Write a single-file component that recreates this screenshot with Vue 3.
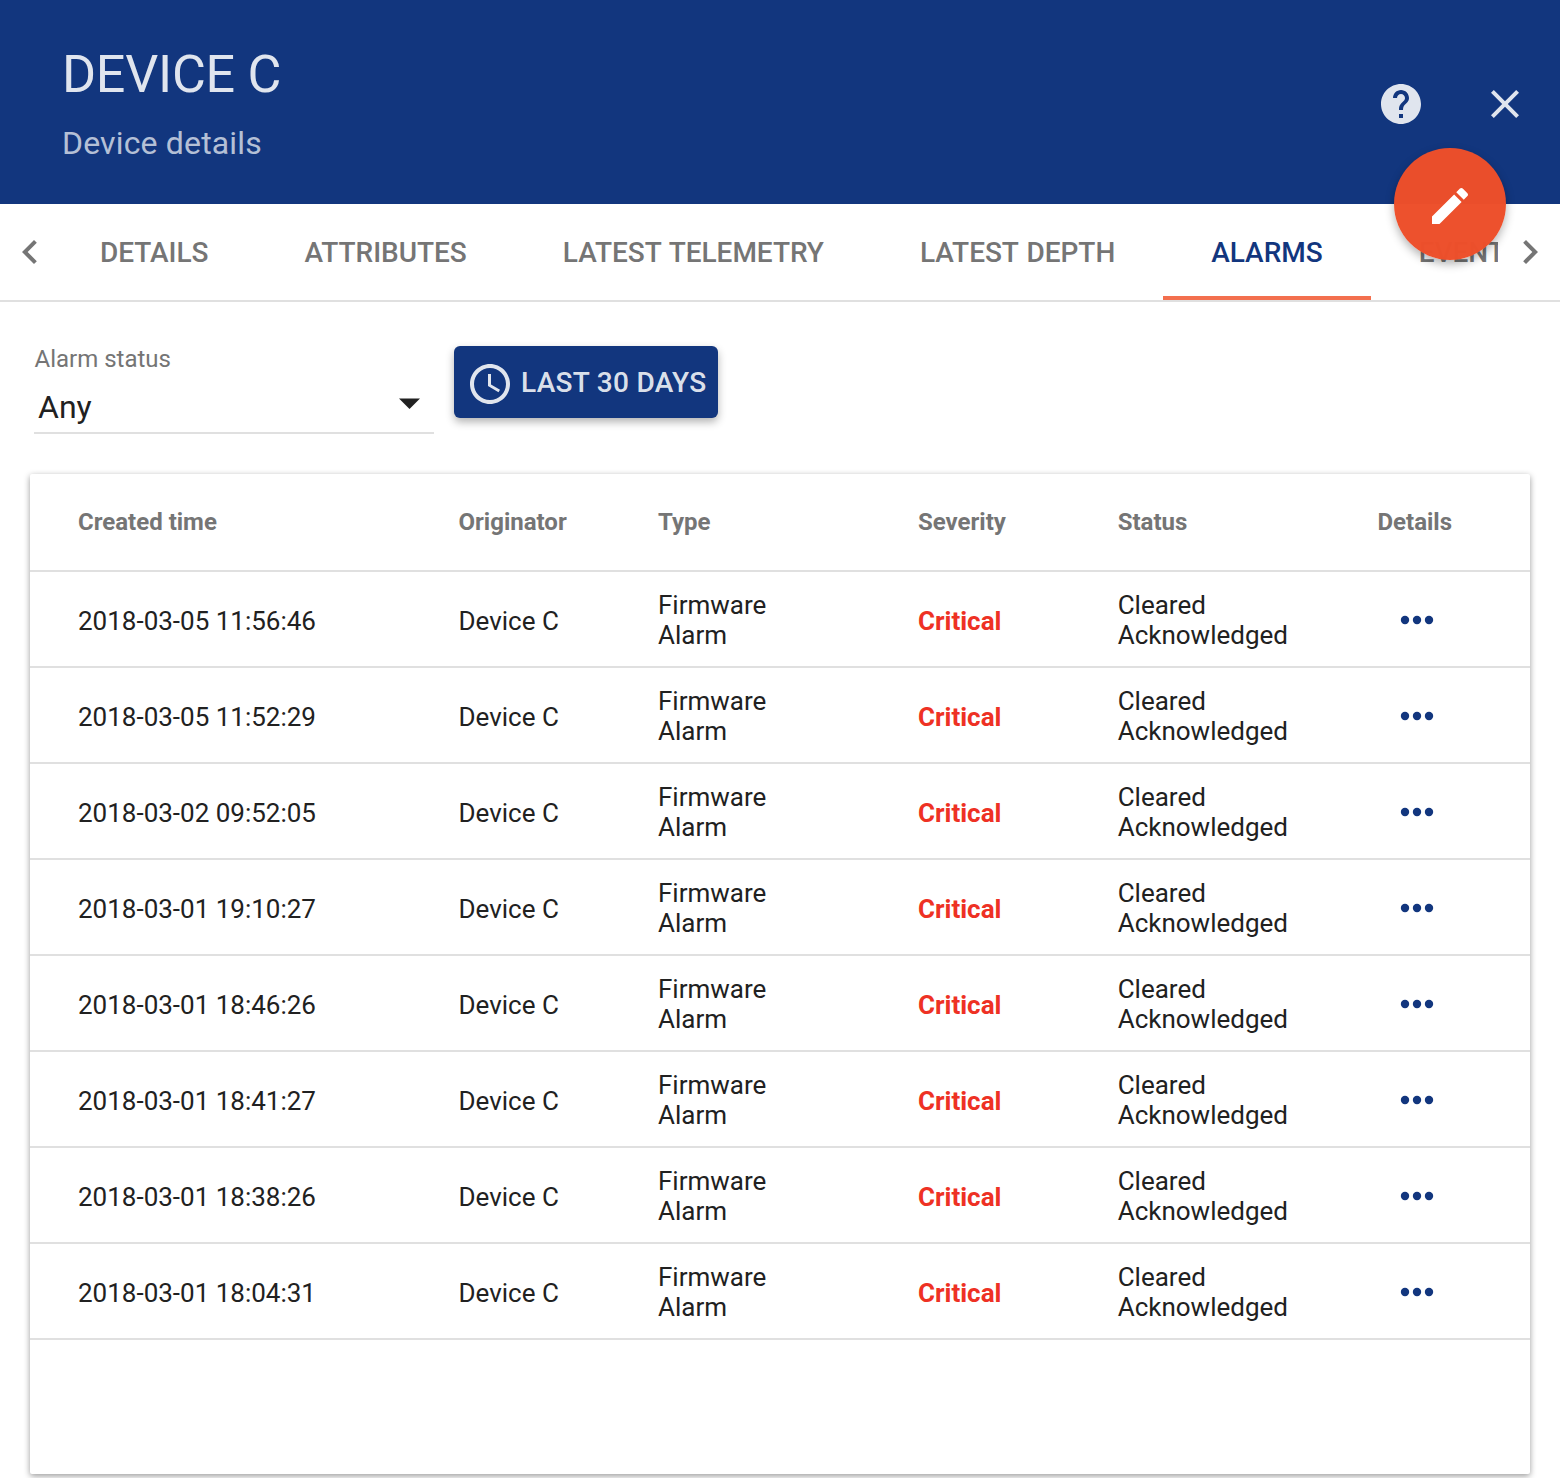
<script setup>
const tabs = ['DETAILS', 'ATTRIBUTES', 'LATEST TELEMETRY', 'LATEST DEPTH', 'ALARMS', 'EVENTS']
const times = [
  '2018-03-05 11:56:46', '2018-03-05 11:52:29', '2018-03-02 09:52:05', '2018-03-01 19:10:27',
  '2018-03-01 18:46:26', '2018-03-01 18:41:27', '2018-03-01 18:38:26', '2018-03-01 18:04:31',
]
</script>

<template>
  <div class="page">
    <header class="toolbar">
      <div class="titles">
        <h1>DEVICE C</h1>
        <p>Device details</p>
      </div>
      <svg class="help" viewBox="0 0 24 24"><path d="M12 2C6.48 2 2 6.48 2 12s4.480 10 10 10 10-4.480 10-10S17.520 2 12 2zm1 17h-2v-2h2v2zm2.070-7.750l-.9.920C13.450 12.900 13 13.500 13 15h-2v-.5c0-1.100.45-2.100 1.170-2.830l1.240-1.260c.37-.36.59-.86.59-1.410 0-1.100-.9-2-2-2s-2 .9-2 2H8c0-2.210 1.790-4 4-4s4 1.790 4 4c0 .88-.36 1.680-.93 2.250z" /></svg>
      <svg class="close" viewBox="0 0 24 24"><path d="M19 6.410L17.590 5 12 10.590 6.410 5 5 6.410 10.590 12 5 17.590 6.410 19 12 13.410 17.590 19 19 17.590 13.410 12z" /></svg>
      <button class="fab"><svg viewBox="0 0 24 24"><path d="M3 17.250V21h3.750L17.810 9.940l-3.750-3.750L3 17.250zM20.710 7.040c.39-.39.39-1.020 0-1.410l-2.340-2.340c-.39-.39-1.020-.39-1.410 0l-1.830 1.830 3.750 3.750 1.830-1.830z" /></svg></button>
    </header>
    <nav class="tabs">
      <svg class="arrow" viewBox="0 0 24 24"><path d="M15.410 7.410L14 6l-6 6 6 6 1.410-1.410L10.830 12z" /></svg>
      <div class="strip">
        <a v-for="t in tabs" :key="t" :class="{ active: t === 'ALARMS' }">{{ t }}</a>
      </div>
      <svg class="arrow next" viewBox="0 0 24 24"><path d="M10 6L8.590 7.410 13.170 12l-4.580 4.590L10 18l6-6z" /></svg>
    </nav>
    <section class="filters">
      <div class="field">
        <label>Alarm status</label>
        <div class="select"><span>Any</span><svg class="caret" viewBox="0 0 21 11"><path d="M0 .5h21L10.500 11z" /></svg></div>
      </div>
      <button class="range">
        <svg viewBox="0 0 24 24"><path d="M11.990 2C6.470 2 2 6.480 2 12s4.470 10 9.990 10C17.520 22 22 17.520 22 12S17.520 2 11.990 2zM12 20c-4.420 0-8-3.580-8-8s3.580-8 8-8 8 3.580 8 8-3.580 8-8 8zM12.500 7H11v6l5.250 3.150.75-1.230-4.500-2.670z" /></svg>
        <span>LAST 30 DAYS</span>
      </button>
    </section>
    <main class="card">
      <div class="row head">
        <div>Created time</div><div>Originator</div><div>Type</div><div>Severity</div><div>Status</div><div>Details</div>
      </div>
      <div v-for="t in times" :key="t" class="row">
        <div class="single">{{ t }}</div><div class="single">Device C</div><div>Firmware<br />Alarm</div><div class="single critical">Critical</div><div>Cleared<br />Acknowledged</div>
        <div class="more"><svg viewBox="0 0 36 10"><circle cx="6" cy="5" r="4.200" /><circle cx="18" cy="5" r="4.200" /><circle cx="30" cy="5" r="4.200" /></svg></div>
      </div>
    </main>
  </div>
</template>

<style>
body { margin: 0; background: #fff; }
</style>

<style scoped>
* { box-sizing: border-box; }
svg { display: block; fill: currentColor; flex: none; }
button { border: 0; padding: 0; font: inherit; }
.page { width: 1560px; height: 1478px; overflow: hidden; display: flex; flex-direction: column; font-family: Roboto, sans-serif; color: #212121; }
.toolbar { position: relative; height: 204px; flex: none; background: #12367e; color: rgba(255, 255, 255, 0.87); display: flex; align-items: center; padding: 4px 31px 0 62px; }
.titles { flex: 1; align-self: flex-start; padding-top: 41px; }
h1 { margin: 0; font-size: 52px; line-height: 60px; font-weight: 400; letter-spacing: -0.26px; }
p { margin: 17px 0 0; font-size: 32px; line-height: 42px; letter-spacing: 0.16px; color: rgba(255, 255, 255, 0.7); }
.help { width: 48px; height: 48px; margin-right: 56px; }
.close { width: 48px; height: 48px; }
.fab { position: absolute; z-index: 3; left: 1394px; top: 148px; width: 112px; height: 112px; border-radius: 50%; background: rgba(237, 79, 42, 0.99); color: #fff; display: flex; align-items: center; justify-content: center; box-shadow: 0 4px 10px rgba(0, 0, 0, 0.3); }
.fab svg { width: 48px; height: 48px; margin-top: 4px; }
.tabs { height: 98px; flex: none; display: flex; border-bottom: 2px solid #e0e0e0; color: #757575; }
.arrow { width: 48px; height: 48px; margin: 24px 10px 0 6px; }
.next { margin: 24px 6px 0 8px; }
.strip { flex: 1; min-width: 0; overflow: hidden; display: flex; margin-left: -12px; }
.strip a { flex: none; height: 96px; padding: 1px 48px 0; font-size: 28px; line-height: 96px; font-weight: 500; letter-spacing: -0.03px; word-spacing: 1.3px; }
.strip .active { color: #12367e; border-bottom: 4px solid #f36f4e; }
.filters { height: 172px; flex: none; display: flex; padding: 44px 34px 0; }
.field { width: 400px; height: 88px; border-bottom: 2px solid #e0e0e0; }
label { display: block; padding-left: 0.5px; font-size: 24px; line-height: 26px; color: #757575; }
.select { display: flex; justify-content: space-between; align-items: center; height: 70px; padding: 0 14px 0 4px; font-size: 32px; }
.caret { width: 21px; height: 11px; margin-bottom: 7px; }
.range { width: 264px; height: 72px; margin-left: 20px; border-radius: 6px; background: #12367e; color: rgba(255, 255, 255, 0.87); display: flex; align-items: center; padding-left: 12px; box-shadow: 0 4px 8px rgba(0, 0, 0, 0.3); font-size: 28px; font-weight: 500; letter-spacing: 0.3px; }
.range svg { width: 48px; height: 48px; margin: 4px 7px 0 0; }
.card { width: 1500px; height: 1000px; flex: none; margin-left: 30px; background: #fff; border-radius: 2px; box-shadow: 0 2px 6px rgba(0, 0, 0, 0.4); }
.row { height: 96px; display: grid; grid-template-columns: 380.5px 199.5px 260px 199.7px 259.8px 1fr; align-items: center; padding: 2px 0 0 48px; border-bottom: 2px solid #e0e0e0; font-size: 26px; line-height: 30px; }
.head { height: 98px; padding-top: 0; color: #757575; font-size: 24px; font-weight: 700; }
.single { padding-top: 2px; }
.row .critical { color: #ee3124; font-weight: 700; }
.more { padding-left: 22px; color: #12367e; }
.more svg { width: 36px; height: 10px; }
</style>
